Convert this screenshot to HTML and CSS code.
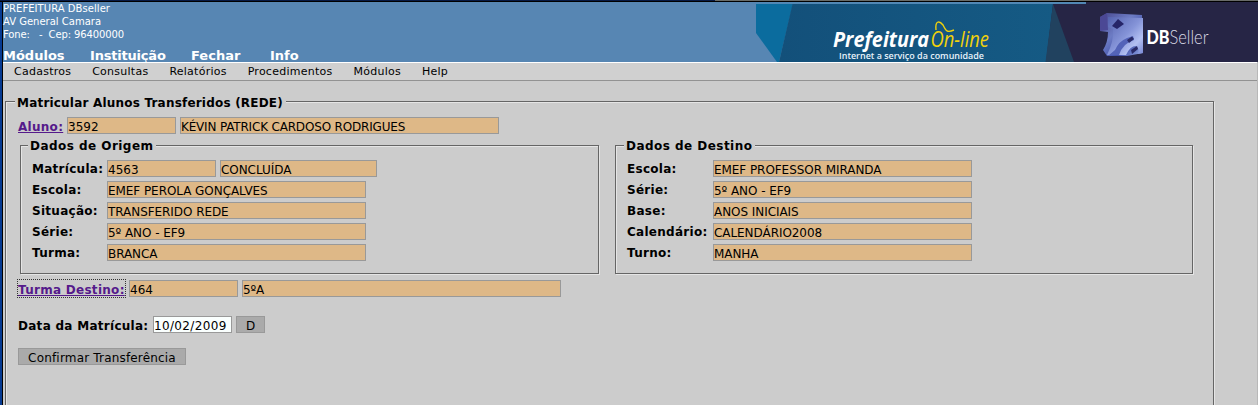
FILE: index.html
```html
<!DOCTYPE html>
<html lang="pt-BR">
<head>
<meta charset="utf-8">
<title>Matricular Alunos Transferidos (REDE)</title>
<link rel="stylesheet" href="styles.css">
</head>
<body>
<div class="topline"></div>
<div class="window">
  <header class="header">
    <div class="identity">
      <div class="entity">PREFEITURA DBseller</div>
      <div class="street">AV General Camara</div>
      <div class="phone">Fone: &nbsp; - &nbsp;Cep: 96400000</div>
      <nav class="mainnav"><a class="n1">Módulos</a><a class="n2">Instituição</a><a class="n3">Fechar</a><a class="n4">Info</a></nav>
    </div>
    <svg class="banner" width="502" height="60" viewBox="756 2 502 60">
      <defs>
        <linearGradient id="teal"><stop offset="0" stop-color="#13507a"/><stop offset=".5" stop-color="#14557f"/><stop offset="1" stop-color="#155a84"/></linearGradient>
        <linearGradient id="cube" x1="0" y1="0" x2="1" y2="1"><stop offset="0" stop-color="#45458c"/><stop offset=".4" stop-color="#6d7cc4"/><stop offset=".7" stop-color="#3f4fa9"/><stop offset="1" stop-color="#9aaee8"/></linearGradient>
        <linearGradient id="face" x1="0" y1="0" x2="1" y2="1"><stop offset="0" stop-color="#5361ae"/><stop offset=".5" stop-color="#8594d8"/><stop offset=".75" stop-color="#b3c0f2"/><stop offset="1" stop-color="#7384d2"/></linearGradient>
      </defs>
      <path d="M756 4H793L779 62H777L756 33Z" fill="#0b6c9e"/>
      <path d="M792.500 4H1054L1046 62H779Z" fill="url(#teal)"/>
      <path d="M1053 4H1086V2H1258V62H1046Z" fill="#262545"/>
      <path d="M1053 4L1074 62H1045.500Z" fill="#21425f"/>
      <path d="M756 2H1086V4H756Z" fill="#5288b5"/>
      <path d="M1100 17L1107 13L1142 15L1143 53L1127 56L1107 56L1103 50Q1108 42 1108 32L1100 31Z" fill="url(#cube)"/>
      <path d="M1108 17L1143 18L1143 53L1138 54Q1140 49 1136 46Q1130 46 1126 55L1107 55Q1114 41 1113 29L1108 27Z" fill="url(#face)"/>
      <path d="M1112 26L1118 19L1124 24L1117 29Z" fill="#262568"/>
      <path d="M1115 50Q1119 41 1127 38L1133 36L1134 40Q1123 43 1119 55L1109 55Z" fill="#5363b8"/>
      <path d="M1127 40L1132 36.500L1134 39L1129 43ZM1131 50L1137 46L1138 49L1132 54Z" fill="#292a68"/>
      <path d="M1100 17L1107 13L1108 30L1100 31Z" fill="#4b4895"/>
      <path d="M936 30C935 21 939 20 943 25C946 31 947 33 954 30" fill="none" stroke="#f1d10b" stroke-width="1.400"/>
      <text class="brand" x="833" y="47" textLength="96" lengthAdjust="spacingAndGlyphs">Prefeitura</text>
      <text class="online" x="930.500" y="47" textLength="58.500" lengthAdjust="spacingAndGlyphs">On-line</text>
      <text class="slogan" x="839" y="58.500" textLength="145" lengthAdjust="spacingAndGlyphs">Internet a serviço da comunidade</text>
      <text class="db" x="1146.500" y="43.500" textLength="23" lengthAdjust="spacingAndGlyphs">DB</text>
      <text class="seller" x="1169.500" y="43.500" textLength="39" lengthAdjust="spacingAndGlyphs">Seller</text>
    </svg>
  </header>
  <nav class="menu"><a>Cadastros</a><a>Consultas</a><a>Relatórios</a><a>Procedimentos</a><a>Módulos</a><a>Help</a></nav>
  <main class="group page">
    <h1 class="legend">Matricular Alunos Transferidos (REDE)</h1>
    <div class="row student"><a class="label link">Aluno:</a><span class="field code">3592</span><span class="field wide">KÉVIN PATRICK CARDOSO RODRIGUES</span></div>
    <div class="panels">
      <section class="group panel">
        <h2 class="legend">Dados de Origem</h2>
        <div class="rows origin">
          <span class="label">Matrícula:</span><div class="row"><span class="field code">4563</span><span class="field status">CONCLUÍDA</span></div>
          <span class="label">Escola:</span><span class="field">EMEF PEROLA GONÇALVES</span>
          <span class="label">Situação:</span><span class="field">TRANSFERIDO REDE</span>
          <span class="label">Série:</span><span class="field">5º ANO - EF9</span>
          <span class="label">Turma:</span><span class="field">BRANCA</span>
        </div>
      </section>
      <section class="group panel second">
        <h2 class="legend">Dados de Destino</h2>
        <div class="rows target">
          <span class="label">Escola:</span><span class="field">EMEF PROFESSOR MIRANDA</span>
          <span class="label">Série:</span><span class="field">5º ANO - EF9</span>
          <span class="label">Base:</span><span class="field">ANOS INICIAIS</span>
          <span class="label">Calendário:</span><span class="field">CALENDÁRIO2008</span>
          <span class="label">Turno:</span><span class="field">MANHA</span>
        </div>
      </section>
    </div>
    <div class="row class-row"><a class="label link focused">Turma Destino:</a><span class="field code">464</span><span class="field wide">5ºA</span></div>
    <div class="row date-row"><span class="label">Data da Matrícula:</span><span class="field date">10/02/2009</span><button class="button pick">D</button></div>
    <button class="button confirm">Confirmar Transferência</button>
  </main>
</div>
</body>
</html>
```

FILE: styles.css
```css
* { box-sizing: border-box; }
body {
  margin: 0;
  height: 405px;
  overflow: hidden;
  background: #ccc;
  color: #000;
  font: 12px/15px "DejaVu Sans", sans-serif;
  white-space: nowrap;
}
.topline {
  height: 2px;
  background: linear-gradient(90deg, #071a44 0 715px, #686b68 715px);
  border-bottom: 1px solid #000;
}
.window {
  height: 403px;
  border-left: 3px solid #000;
  border-right: 1px solid #b8b8b8;
  background: #ccc;
  position: relative;
}
.window::before {
  content: "";
  position: absolute;
  left: -3px;
  top: 0;
  width: 2px;
  height: 403px;
  background: #063a91;
}
.header {
  height: 60px;
  margin-right: -1px;
  display: flex;
  justify-content: space-between;
  background: #5786b3;
  color: #fff;
}
.identity { width: 400px; font-size: 10px; line-height: 13px; }
.entity { letter-spacing: .05px; }
.phone { letter-spacing: -.12px; }
.mainnav { display: flex; margin-top: 7px; font-size: 13px; font-weight: bold; line-height: 15px; }
.n1 { width: 87px; }
.n2 { width: 101px; letter-spacing: -.2px; }
.n3 { width: 79px; }
.banner { display: block; flex: none; }
.brand { font: italic bold 21px "Open Sans", sans-serif; fill: #fff; }
.online { font: italic 21px "Open Sans", sans-serif; fill: #f1d10b; }
.slogan { font: 600 9.5px "Open Sans", sans-serif; fill: #e7f2fa; }
.db { font: 900 18px Lato, sans-serif; fill: #fff; }
.seller { font: 300 19px Lato, sans-serif; fill: #dad9e5; }
.menu {
  height: 19px;
  display: flex;
  gap: 21px;
  padding-left: 11px;
  background: #d0d0d0;
  border-top: 1px solid #fff;
  border-bottom: 1px solid #929292;
  font-size: 11px;
  line-height: 18px;
  letter-spacing: .25px;
}
.group {
  border: 1px solid #656565;
  box-shadow: 1px 1px #e5e5e5, inset 1px 1px #e5e5e5;
}
.legend {
  width: max-content;
  height: 15px;
  margin: -8px 0 0 9px;
  padding: 0 3px 0 2px;
  background: #ccc;
  font-size: 12px;
  line-height: 15px;
  letter-spacing: .2px;
}
.page { width: 1209px; height: 320px; margin: 20px 0 0 2px; }
.page > .legend { line-height: 19px; }
.row { display: flex; gap: 4px; height: 17px; }
.label { font-size: 12px; font-weight: bold; line-height: 20px; letter-spacing: .28px; }
.link { color: #551a8b; text-decoration: underline; }
.field {
  width: 259px;
  height: 17px;
  border: 1px solid #999;
  background: #deb887;
  line-height: 19px;
  letter-spacing: -.06px;
}
.code { width: 109px; letter-spacing: 0; }
.wide { width: 319px; letter-spacing: -.18px; }
.status { width: 157px; }
.student .code, .student .wide, .class-row .field { line-height: 18px; }
.student { margin: 8px 0 0 12px; }
.student .label { width: 45px; }
.panels { display: flex; gap: 16px; margin: 11px 0 0 14px; }
.panel { width: 579px; height: 129px; }
.second { width: 578px; }
.panel .legend { margin-left: 7px; line-height: 16px; letter-spacing: .46px; }
.second .legend { margin-left: 8px; }
.rows { display: grid; grid-auto-rows: 17px; row-gap: 4px; margin: 7px 0 0 11px; }
.rows .label { line-height: 19px; }
.origin { grid-template-columns: 75px auto; }
.target { grid-template-columns: 86px auto; }
.class-row { margin: 6px 0 0 12px; }
.class-row .label { width: 107px; }
.focused { outline: 1px dotted #333; outline-offset: 0; }
.date-row { margin: 19px 0 0 12px; }
.date-row .label { width: 131px; }
.date { width: 79px; background: #fafffe; letter-spacing: .35px; }
.button {
  height: 17px;
  padding: 1px 0 0;
  border: 1px solid #999;
  background: #aaa;
  color: #000;
  font: 12px/16px "DejaVu Sans", sans-serif;
}
.pick { width: 29px; }
.confirm { display: block; width: 168px; margin: 15px 0 0 12px; letter-spacing: .18px; }
```
